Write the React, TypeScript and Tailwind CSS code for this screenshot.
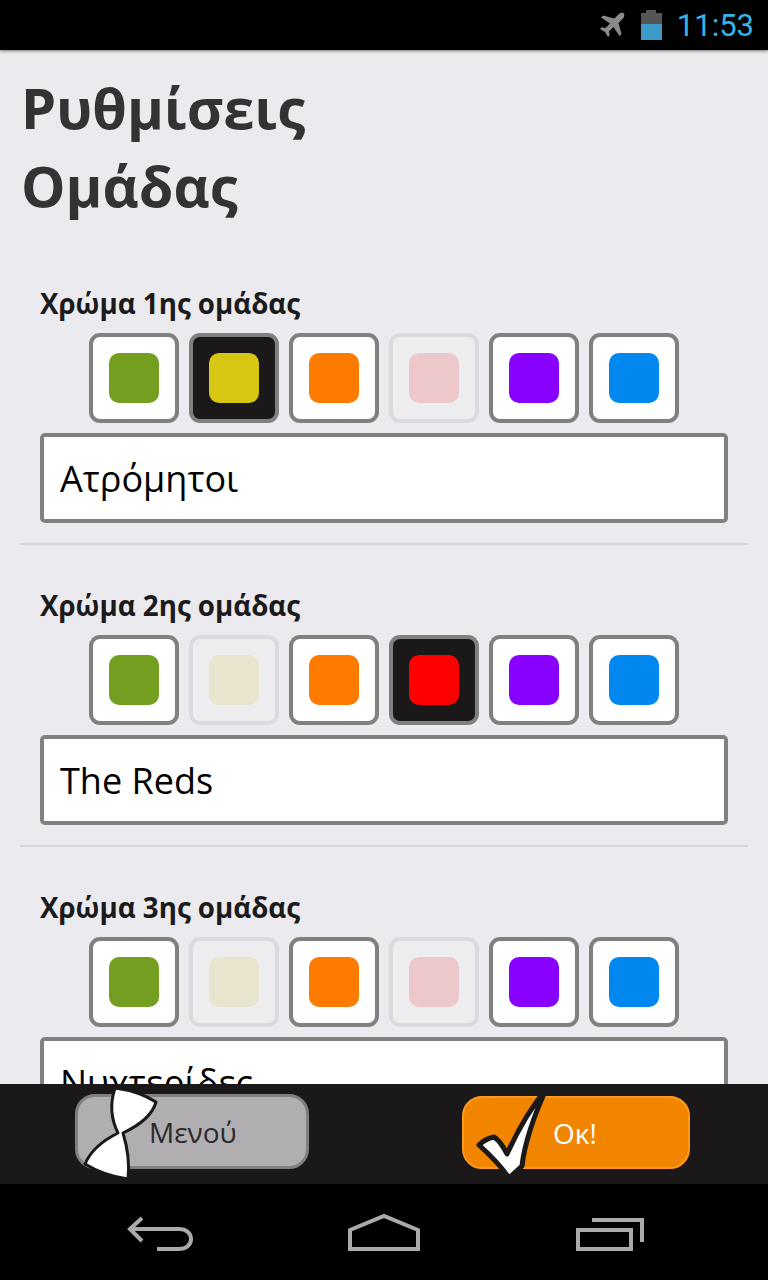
const sans = { fontFamily: '"Open Sans", "Noto Sans", sans-serif' }

const colors = ["#739e1f", "#d8c712", "#ff7b00", "#ff0000", "#8800ff", "#0088f0"]

const teams = [
  { label: "Χρώμα 1ης ομάδας", name: "Ατρόμητοι", selected: 1, disabled: [3] },
  { label: "Χρώμα 2ης ομάδας", name: "The Reds", selected: 3, disabled: [1] },
  { label: "Χρώμα 3ης ομάδας", name: "Νυχτερίδες", selected: -1, disabled: [1, 3] },
]

function Swatch({ color, selected, disabled }: { color: string; selected: boolean; disabled: boolean }) {
  return (
    <div
      className={`flex h-[90px] w-[90px] items-center justify-center rounded-[11px] border-4 border-[#808080] ${
        selected ? "bg-[#1a1818]" : "bg-white"
      } ${disabled ? "opacity-[0.14]" : ""}`}
    >
      <div className="h-[50px] w-[50px] rounded-[10px]" style={{ backgroundColor: color }} />
    </div>
  )
}

function TeamRow({ team, last }: { team: (typeof teams)[number]; last: boolean }) {
  return (
    <section className="pt-[39px]">
      <h2 className="h-[51px] pl-[40px] text-[27.7px] font-bold leading-[42px] text-[#1c1b1c]">{team.label}</h2>
      <div className="ml-[89px] flex gap-[10px]">
        {colors.map((c, i) => (
          <Swatch key={c} color={c} selected={team.selected === i} disabled={team.disabled.includes(i)} />
        ))}
      </div>
      <div className="mx-[40px] mt-[10px] flex h-[90px] items-center rounded-[5px] border-4 border-[#808080] bg-white pl-[16px] pt-[2px] text-[36px] text-black">
        {team.name}
      </div>
      {!last && <div className="mx-[20px] mt-[20px] h-[2px] bg-[#d6d5d9]" />}
    </section>
  )
}

export default function App() {
  return (
    <div className="flex h-[1280px] w-[768px] flex-col overflow-hidden bg-black" style={sans}>
      {/* status bar */}
      <div className="relative z-10 flex h-[50px] shrink-0 items-center justify-end bg-black pr-[14px] shadow-[0_1px_3px_rgba(0,0,0,0.5)]">
        <svg width="28" height="28" viewBox="0 0 28 28" className="mr-[15px]">
          <path
            fill="#8a8a8a"
            d="M26 2.500c-1.600-1.300-4-.6-5.600 1l-4 4L5 4.500 3 6.500l9 6-4.500 4.600-4-.8L2 18l5 3 3 5 1.700-1.500-.8-4 4.600-4.500 6 9 2-2-3-11 4-4c1.600-1.600 2.300-3.900 1.500-5.500z"
          />
        </svg>
        <div className="mr-[15px] h-[30px] w-[21px]">
          <div className="mx-auto h-[3px] w-[10px] bg-[#555]" />
          <div className="h-[11px] w-full bg-[#555]" />
          <div className="h-[16px] w-full bg-[#3c9bc8]" />
        </div>
        <span className="text-[31px] leading-none text-[#33b5e5]" style={{ fontFamily: "Roboto, sans-serif" }}>
          11:53
        </span>
      </div>

      {/* content */}
      <main className="min-h-0 flex-1 overflow-hidden bg-[#ebeaee]">
        <h1 className="pb-[19px] pl-[21px] pt-[18px] text-[56px] font-bold leading-[78px] text-[#333235]">
          Ρυθμίσεις
          <br />
          Ομάδας
        </h1>
        {teams.map((t, i) => (
          <TeamRow key={t.label} team={t} last={i === teams.length - 1} />
        ))}
      </main>

      {/* bottom buttons */}
      <div className="flex h-[100px] shrink-0 items-start bg-[#1a1818]">
        <div className="relative ml-[75px] mt-[10px] flex h-[75px] w-[234px] items-center rounded-[20px] border-[3px] border-[#808080] bg-[#b0aeb1] pl-[71px] text-[28px] text-[#2a2a2a]">
          Μενού
          <svg width="80" height="96" viewBox="0 0 80 96" className="absolute left-[2px] top-[-11px]">
            <path
              fill="#fff"
              stroke="#1a1818"
              strokeWidth="3"
              strokeLinejoin="round"
              d="M35 2C50 4 65 9 76 16 73 27 62 38 43 47 47 60 50 75 48 93 33 91 18 86 5 78 10 66 22 55 38 47 32 35 29 20 35 2Z"
            />
          </svg>
        </div>
        <div className="relative ml-[153px] mt-[12px] flex h-[73px] w-[228px] items-center rounded-[20px] border-2 border-[#ff9a1f] bg-[#f28500] pl-[89px] text-[28px] text-white">
          Οκ!
          <svg width="85" height="100" viewBox="0 0 85 100" className="absolute left-[6px] top-[-14px]">
            <path
              fill="#fff"
              stroke="#1a1818"
              strokeWidth="5"
              strokeLinejoin="round"
              d="M77 4C62 22 47 48 37 70 33 62 29 56 24 53 19 54 13 57 9 61 19 70 31 82 39 94L52 82C54 62 64 30 77 4Z"
            />
          </svg>
        </div>
      </div>

      {/* nav bar */}
      <div className="flex h-[96px] shrink-0 items-start bg-black">
        <svg width="768" height="96" viewBox="0 0 768 96" fill="none" stroke="#aaaaaa" strokeWidth="4">
          <path d="M157 65h22c7 0 12-4 12-10s-5-10-12-10h-49" />
          <path d="M142 34l-12 11 12 12" />
          <path d="M350 65V46l34-14 34 14v19z" />
          <path d="M578 46h53v19h-53z" />
          <path d="M592 36h50v22" />
        </svg>
      </div>
    </div>
  )
}
